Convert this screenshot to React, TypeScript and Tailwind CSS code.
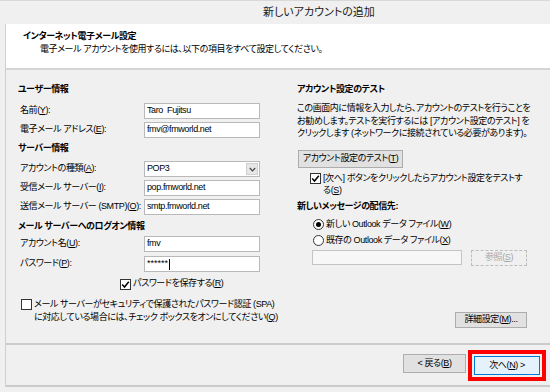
import React from 'react';

const font = "font-['Liberation_Sans','Noto_Sans_CJK_JP',sans-serif] [font-feature-settings:'palt']";

function CheckBox({ checked }: { checked: boolean }) {
  return (
    <span className="w-[11px] h-[11px] border border-[#333] bg-white flex items-center justify-center shrink-0">
      {checked && (
        <svg width="9" height="9" viewBox="0 0 9 9">
          <path d="M1.2 4.6 L3.5 7 L7.8 1.8" stroke="#000" strokeWidth="1.5" fill="none" />
        </svg>
      )}
    </span>
  );
}

function Radio({ checked }: { checked: boolean }) {
  return (
    <span className="w-[11px] h-[11px] rounded-full border border-[#333] bg-white flex items-center justify-center shrink-0">
      {checked && <span className="w-[5px] h-[5px] rounded-full bg-black" />}
    </span>
  );
}

function Field({ label, children, mt }: { label: React.ReactNode; children: React.ReactNode; mt: string }) {
  return (
    <div className={`flex items-center h-[16px] ${mt}`}>
      <div className="w-[126px] pl-[2px]">{label}</div>
      <div className="w-[116px] h-[16px] border border-[#b9b9b9] bg-white pl-[2px] flex items-center">{children}</div>
    </div>
  );
}

export default function App() {
  return (
    <div className={`w-[550px] h-[392px] bg-[#f0f0f0] overflow-hidden whitespace-nowrap border-t border-[#d9d9d9] text-[9px] tracking-[-0.4px] text-black ${font}`}>
      <div className="h-[23px] pl-[263px] flex items-center text-[11px] tracking-normal text-[#222]">新しいアカウントの追加</div>

      <div className="ml-[5px] border-l border-[#cfcfcf]">
        <div className="h-[46px] bg-white border-b-2 border-[#d4d4d4] pl-[17px] pt-[6px]">
          <div className="font-bold h-[13px] leading-[13px]">インターネット電子メール設定</div>
          <div className="pl-[17px] h-[13px] leading-[13px]">電子メール アカウントを使用するには、以下の項目をすべて設定してください。</div>
        </div>

        <div className="h-[273px] flex">
          <div className="w-[291px] pl-[12px]">
            <div className="font-bold h-[16px] leading-[16px] mt-[11px]">ユーザー情報</div>
            <Field mt="mt-[6px]" label={<>名前(<u>Y</u>):</>}>Taro&nbsp;&nbsp;Fujitsu</Field>
            <Field mt="mt-[3px]" label={<>電子メール アドレス(<u>E</u>):</>}>fmv@fmworld.net</Field>
            <div className="font-bold h-[16px] leading-[16px] mt-[2px]">サーバー情報</div>
            <div className="flex items-center h-[16px] mt-[5px]">
              <div className="w-[126px] pl-[2px]">アカウントの種類(<u>A</u>):</div>
              <div className="w-[116px] h-[16px] border border-[#b9b9b9] bg-white pl-[2px] flex items-center justify-between">
                <span>POP3</span>
                <span className="w-[12px] h-[12px] mr-[1px] bg-[#e6e6e6] border border-[#d0d0d0] flex items-center justify-center">
                  <svg width="7" height="5" viewBox="0 0 7 5">
                    <path d="M0.8 1 L3.5 3.8 L6.2 1" stroke="#444" strokeWidth="1.2" fill="none" />
                  </svg>
                </span>
              </div>
            </div>
            <Field mt="mt-[3px]" label={<>受信メール サーバー(<u>I</u>):</>}>pop.fmworld.net</Field>
            <Field mt="mt-[3px]" label={<>送信メール サーバー (SMTP)(<u>O</u>):</>}>smtp.fmworld.net</Field>
            <div className="font-bold h-[16px] leading-[16px] mt-[3px]">メール サーバーへのログオン情報</div>
            <Field mt="mt-[2px]" label={<>アカウント名(<u>U</u>):</>}>fmv</Field>
            <Field mt="mt-[4px]" label={<>パスワード(<u>P</u>):</>}>
              <span className="tracking-[0px]">******</span>
              <span className="w-px h-[11px] bg-black ml-[1px]" />
            </Field>
            <div className="flex items-center gap-[2px] ml-[102px] mt-[6px] h-[12px]">
              <CheckBox checked />
              <span>パスワードを保存する(<u>R</u>)</span>
            </div>
            <div className="flex items-start gap-[2px] ml-[3px] mt-[8px]">
              <div className="mt-[1px]"><CheckBox checked={false} /></div>
              <div className="leading-[13px]">
                メール サーバーがセキュリティで保護されたパスワード認証 (SPA)<br />
                に対応している場合には、チェック ボックスをオンにしてください(<u>Q</u>)
              </div>
            </div>
          </div>

          <div className="w-[230px] flex flex-col">
            <div className="font-bold h-[16px] leading-[16px] mt-[11px]">アカウント設定のテスト</div>
            <div className="leading-[12.5px] mt-[5px]">
              この画面内に情報を入力したら、アカウントのテストを行うことを<br />
              お勧めします。テストを実行するには [アカウント設定のテスト] を<br />
              クリックします (ネットワークに接続されている必要があります)。
            </div>
            <div className="mt-[10px] ml-[1px] w-[105px] h-[18px] bg-[#e1e1e1] border border-[#adadad] flex items-center justify-center">
              アカウント設定のテスト(<u>T</u>)
            </div>
            <div className="flex items-start gap-[2px] ml-[13px] mt-[4px]">
              <div className="mt-[1px]"><CheckBox checked /></div>
              <div className="leading-[12px]">
                [次へ] ボタンをクリックしたらアカウント設定をテストす<br />
                る(<u>S</u>)
              </div>
            </div>
            <div className="font-bold h-[16px] leading-[16px] mt-[2px]">新しいメッセージの配信先:</div>
            <div className="flex items-center gap-[2px] ml-[16px] mt-[4px] h-[14px]">
              <Radio checked />
              <span>新しい Outlook データ ファイル(<u>W</u>)</span>
            </div>
            <div className="flex items-center gap-[2px] ml-[16px] mt-[2px] h-[14px]">
              <Radio checked={false} />
              <span>既存の Outlook データ ファイル(<u>X</u>)</span>
            </div>
            <div className="flex items-center gap-[9px] ml-[15px] mt-[2px]">
              <div className="w-[150px] h-[15px] border border-[#c4c4c4] bg-[#f7f7f7]" />
              <div className="w-[56px] h-[16px] border border-dashed border-[#bdbdbd] bg-[#f0f0f0] text-[#a6a6a6] flex items-center justify-center">
                参照(<u>S</u>)
              </div>
            </div>
            <div className="mt-auto mb-[15px] ml-auto w-[72px] h-[16px] bg-[#e1e1e1] border border-[#adadad] flex items-center justify-center">
              詳細設定(<u>M</u>)...
            </div>
          </div>
        </div>

        <div className="h-[44px] border-t-2 border-b-2 border-[#cbcbcb] flex justify-end items-start pr-[4px]">
          <div className="mt-[9px] w-[63px] h-[19px] bg-[#e1e1e1] border border-[#adadad] flex items-center justify-center">
            &lt; 戻る(<u>B</u>)
          </div>
          <div className="mt-[5px] ml-[2px] w-[78px] h-[31px] border-[4px] border-[#ff0000] flex items-center justify-center">
            <div className="w-[66px] h-[19px] bg-[#e5f1fb] border border-[#0078d7] flex items-center justify-center">
              次へ(<u>N</u>) &gt;
            </div>
          </div>
        </div>
      </div>
    </div>
  );
}
